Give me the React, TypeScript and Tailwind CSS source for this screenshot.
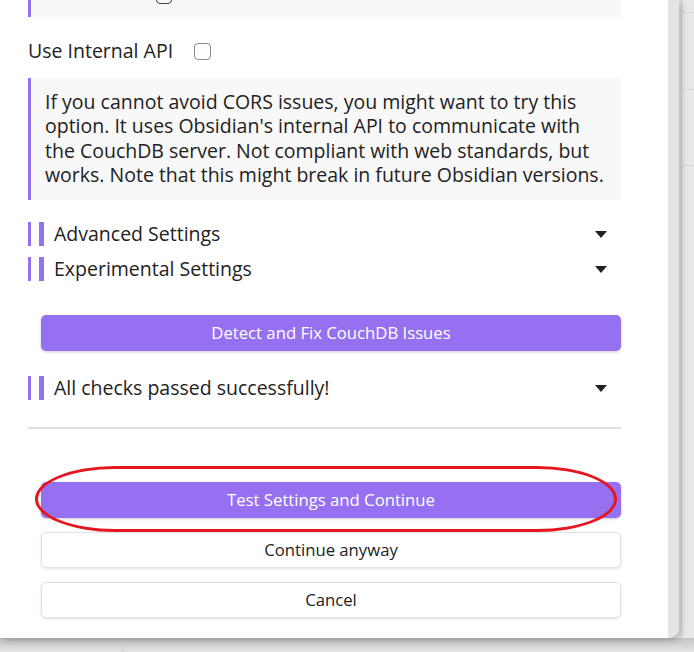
import React from "react";

const purple = "bg-[#9571f2]";

function Caret() {
  return (
    <svg width="12" height="7" viewBox="0 0 12 7" className="mr-[14px]">
      <path d="M0 0 L12 0 L6 7 Z" fill="#222" />
    </svg>
  );
}

function Section({ title }: { title: string }) {
  return (
    <div className="flex h-6 items-center">
      <div className="h-6 w-[3px] bg-[#9571f2]" />
      <div className="ml-2 h-6 w-[5px] bg-[#9571f2]" />
      <span className="ml-[10px] flex-1 text-[19.5px] text-[#222]">{title}</span>
      <Caret />
    </div>
  );
}

function Button({ label, primary }: { label: string; primary?: boolean }) {
  return (
    <button
      className={
        primary
          ? `ml-[13px] h-9 w-[580px] rounded-[5px] ${purple} text-[16.7px] text-white shadow-[0_1px_3px_rgba(0,0,0,0.2)]`
          : "ml-[13px] h-9 w-[580px] rounded-[5px] border border-[#e2e2e2] bg-white text-[16.7px] text-[#222] shadow-[0_1px_3px_rgba(0,0,0,0.12)]"
      }
    >
      {label}
    </button>
  );
}

export default function App() {
  return (
    <div
      className="relative h-[652px] w-[694px] overflow-hidden bg-[#e8e8e8]"
      style={{ fontFamily: '"Open Sans", "Noto Sans", sans-serif' }}
    >
      {/* background pane behind the modal */}
      <div className="absolute left-[681px] top-0 h-full w-px bg-[#d2d2d2]" />
      <div className="absolute left-[681px] top-[12px] h-px w-[13px] bg-[#d6d6d6]" />
      <div className="absolute left-[681px] top-[89px] h-px w-[13px] bg-[#d6d6d6]" />
      <div className="absolute left-[681px] top-[165px] h-px w-[13px] bg-[#d6d6d6]" />
      <div className="absolute left-0 top-[638px] h-[14px] w-full bg-gradient-to-b from-[#c4c4c4] to-[#e4e4e4]" />
      <div className="absolute left-[122px] top-[640px] h-[12px] w-px bg-[#cfcfcf]" />

      {/* modal */}
      <div className="relative flex h-[638px] w-[679px] overflow-hidden rounded-br-[10px] bg-white shadow-[2px_2px_6px_rgba(0,0,0,0.25)]">
        <div className="w-[668px] pl-[28px]">
          <div className="relative h-[17px] w-[593px] overflow-hidden border-l-[3px] border-[#9571f2] bg-[#f8f8f8]">
            <div className="absolute left-[125px] top-[-12px] h-4 w-4 rounded-[4px] border border-[#444]" />
          </div>

          <div className="mt-[21px] flex h-[26px] items-center">
            <span className="text-[19.5px] text-[#222]">Use Internal API</span>
            <span className="ml-[21px] h-[17px] w-[17px] rounded-[4px] border border-[#8a8a8a]" />
          </div>

          <div className="mt-[14px] h-[122px] w-[593px] border-l-[3px] border-[#9571f2] bg-[#f8f8f8] pl-[14px] pr-[10px] pt-[12px] text-[19.5px] leading-[24.3px] text-[#222]">
            If you cannot avoid CORS issues, you might want to try this option. It uses Obsidian's internal API
            to communicate with the CouchDB server. Not compliant with web standards, but works. Note that this
            might break in future Obsidian versions.
          </div>

          <div className="mt-[22px] w-[593px]">
            <Section title="Advanced Settings" />
            <div className="mt-[11px]">
              <Section title="Experimental Settings" />
            </div>
          </div>

          <div className="mt-[34px]">
            <Button label="Detect and Fix CouchDB Issues" primary />
          </div>

          <div className="mt-[25px] w-[593px]">
            <Section title="All checks passed successfully!" />
          </div>

          <div className="mt-[27px] h-[2px] w-[593px] bg-[#e0e0e0]" />

          <div className="relative mt-[53px] flex flex-col gap-[14px]">
            <Button label="Test Settings and Continue" primary />
            <Button label="Continue anyway" />
            <Button label="Cancel" />
            <div className="absolute left-[7px] top-[-16px] h-[66px] w-[582px] rounded-[80px/33px] border-[3.5px] border-[#e8141e]" />
          </div>
        </div>
        <div className="h-full w-[11px] bg-[#e4e4e4]" />
      </div>
    </div>
  );
}
